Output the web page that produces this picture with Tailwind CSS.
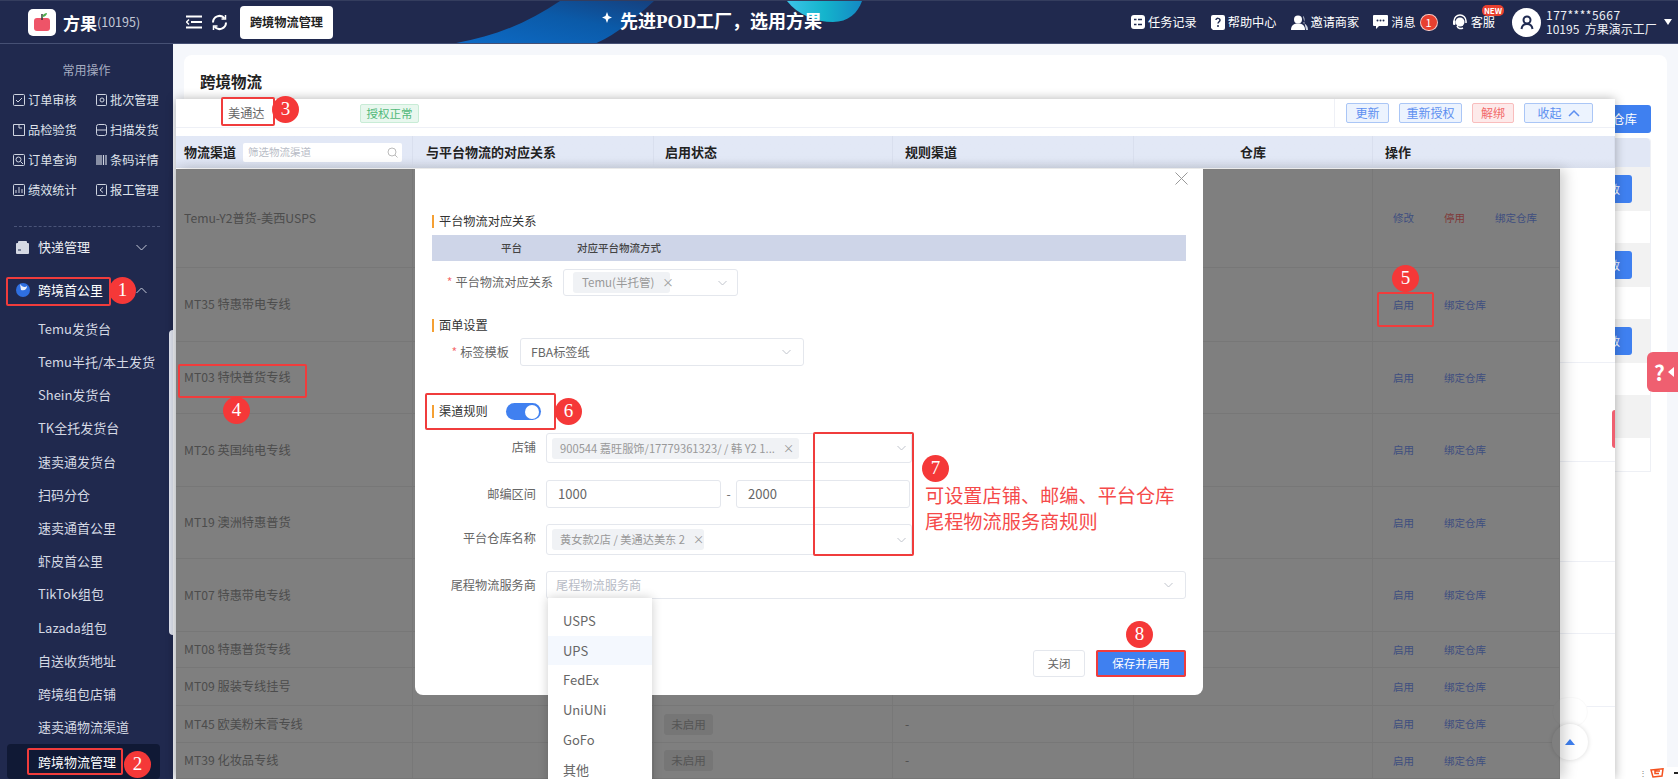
<!DOCTYPE html>
<html lang="zh-CN">
  <head>
    <meta charset="UTF-8" />
    <title>跨境物流管理</title>
    <script src="https://cdn.jsdelivr.net/npm/@tailwindcss/browser@4"></script>
  </head>
  <body class="relative w-[1678px] h-[779px] overflow-hidden bg-[#f5f7fb] font-['Noto_Sans_CJK_SC',sans-serif] text-[#333]">
    <!-- header -->
    <header class="relative h-[44px] bg-[#20294e] border-t border-t-[#343d5e] border-b border-b-[#465074] flex items-center text-white overflow-hidden">
      <svg class="absolute left-[420px] top-0" width="500" height="44" viewBox="0 0 500 44">
        <defs>
          <linearGradient id="swoop" x1="0" y1="1" x2="1" y2="0">
            <stop offset="0" stop-color="#0d6cc8" />
            <stop offset="0.600" stop-color="#0b5aa8" />
            <stop offset="1" stop-color="#15407e" />
          </linearGradient>
          <linearGradient id="teal" x1="0" y1="0" x2="1" y2="0">
            <stop offset="0" stop-color="#3cc4e8" />
            <stop offset="0.500" stop-color="#14b4cc" />
            <stop offset="1" stop-color="#1488c4" />
          </linearGradient>
        </defs>
        <path d="M23 44C70 38 108 22 140 0H234C212 20 196 34 172 44Z" fill="url(#swoop)" />
        <path d="M367 0C378 14 396 21 413 21C428 21 438 12 442 0Z" fill="url(#teal)" />
        <path d="M187 11L188.500 15L192 16.500L188.500 18L187 22L185.500 18L182 16.500L185.500 15Z" fill="#fff" />
      </svg>
      <div class="relative w-[173px] shrink-0 flex items-center pl-[28px]">
        <div class="w-[28px] h-[27px] bg-white rounded-[5px] flex items-center justify-center">
          <svg width="18" height="20" viewBox="0 0 18 20"><rect x="1" y="6" width="16" height="13" rx="3" fill="#ee5468" /><path d="M9 8V2" stroke="#3a3a3a" stroke-width="1.500" /><path d="M9 5C10 2 12 1 14 1C14 3 12 5 9 5Z" fill="#4fae4e" /></svg>
        </div>
        <span class="ml-[7px] text-[17px] font-bold leading-none">方果</span><span class="text-[12.500px] text-[#c3c8d6] leading-none">(10195)</span>
      </div>
      <svg class="relative ml-[13px]" width="16" height="14" viewBox="0 0 16 14" fill="none" stroke="#fff" stroke-width="2"><path d="M0 1.500H16M5 7H16M0 12.500H16" /><path d="M3 4.500L0.500 7L3 9.500" stroke-width="1.500" /></svg>
      <svg class="relative ml-[9px]" width="17" height="17" viewBox="0 0 17 17" fill="none" stroke="#fff" stroke-width="2"><path d="M2 8.500A6.500 6.500 0 0 1 13.500 4.300M15 8.500A6.500 6.500 0 0 1 3.500 12.700" /><path d="M14.500 1V5H10.500M2.500 16V12H6.500" stroke-width="1.500" /></svg>
      <div class="relative ml-[12px] w-[93px] h-[33px] bg-white rounded-[4px] flex items-center justify-center text-[12.200px] font-bold text-[#222]">跨境物流管理</div>
      <div class="relative ml-[287px] text-[18px] font-bold whitespace-nowrap">先进<span class="font-['Liberation_Serif',serif] text-[19px]">POD</span>工厂，选用方果</div>
      <div class="relative ml-auto pr-[6px] flex items-center text-[12.200px]">
        <svg width="14" height="14" viewBox="0 0 14 14"><rect width="14" height="14" rx="3" fill="#fff" /><path d="M3 4.500H5.500M7 4.500H11M3 9.500H5.500M7 9.500H11" stroke="#1f2a50" stroke-width="1.500" /></svg>
        <span class="ml-[3px]">任务记录</span>
        <svg class="ml-[14px]" width="14" height="15" viewBox="0 0 14 15"><path d="M2 0H12A2 2 0 0 1 14 2V13A2 2 0 0 1 12 15H2L0 13V2A2 2 0 0 1 2 0Z" fill="#fff" /><path d="M5 5C5 2.800 9 2.800 9 5.200C9 6.800 7 6.800 7 8.600" stroke="#1f2a50" stroke-width="1.500" fill="none" /><circle cx="7" cy="11" r="1" fill="#1f2a50" /></svg>
        <span class="ml-[3px]">帮助中心</span>
        <svg class="ml-[14px]" width="17" height="15" viewBox="0 0 17 15"><circle cx="7" cy="4.500" r="4" fill="#fff" /><path d="M0 15C0 10 3 8.500 7 8.500C11 8.500 14 10 14 15Z" fill="#fff" /><path d="M12 1C14 2 14 7 12 8C15 9 17 11 17 15H15" fill="#cfd4e0" /></svg>
        <span class="ml-[3px]">邀请商家</span>
        <svg class="ml-[14px]" width="15" height="14" viewBox="0 0 15 14"><path d="M1 0H14A1 1 0 0 1 15 1V10A1 1 0 0 1 14 11H6L3 14V11H1A1 1 0 0 1 0 10V1A1 1 0 0 1 1 0Z" fill="#fff" /><circle cx="4.500" cy="5.500" r="1" fill="#1f2a50" /><circle cx="7.500" cy="5.500" r="1" fill="#1f2a50" /><circle cx="10.500" cy="5.500" r="1" fill="#1f2a50" /></svg>
        <span class="ml-[3px]">消息</span>
        <span class="ml-[4px] w-[18px] h-[17px] rounded-full bg-[#e8402f] border border-white/70 flex items-center justify-center text-[11px] leading-none">1</span>
        <svg class="ml-[14px]" width="16" height="16" viewBox="0 0 16 16" fill="none"><path d="M2 9V7A6 6 0 0 1 14 7V9" stroke="#fff" stroke-width="1.500" /><circle cx="8" cy="8" r="4.500" fill="#fff" /><path d="M5 12C6 15 9 15 11 14" stroke="#fff" stroke-width="1.500" /><rect x="1" y="6.500" width="2.500" height="4.500" rx="1" fill="#fff" /></svg>
        <span class="ml-[3px] mr-[17px]">客服</span>
        <div class="w-[29px] h-[29px] rounded-full bg-white flex items-center justify-center">
          <svg width="14" height="15" viewBox="0 0 14 15" fill="none" stroke="#1f2a50" stroke-width="2"><circle cx="7" cy="5" r="3.500" /><path d="M1.500 14C2 10.500 4 9 7 9C10 9 12 10.500 12.500 14" /></svg>
        </div>
        <div class="ml-[5px] w-[110px] text-[12px] leading-[14px] text-[#eef0f5] whitespace-nowrap">
          <div class="tracking-[0.500px]">177****5667</div>
          <div>10195&nbsp; 方果演示工厂</div>
        </div>
        <div class="ml-[8px] w-0 h-0 border-x-[4px] border-x-transparent border-t-[6px] border-t-white"></div>
      </div>
    </header>
    <span class="absolute left-[1482px] top-[5px] w-[22px] h-[11px] rounded-[5px] bg-[#e8402f] text-white text-[8px] font-bold leading-[11px] text-center">NEW</span>

    <div class="flex h-[735px]">
      <!-- sidebar -->
      <aside class="relative w-[173px] shrink-0 bg-[#20294e] text-[#d5d9e4] text-[13px]">
        <div class="absolute right-0 top-[286px] w-[4px] h-[305px] bg-[#dfe3ee] rounded-l-sm"></div>
        <div class="mt-[18px] h-[16px] leading-[16px] text-center text-[12px] text-[#a6adc2]">常用操作</div>
        <div class="mt-[7px] ml-[13px] w-[150px] grid grid-cols-[83px_67px] auto-rows-[30px] items-center text-[12.200px] text-[#dfe2ea]">
          <div class="flex items-center gap-[3px]"><svg width="12" height="12" viewBox="0 0 12 12" fill="none" stroke="#cfd4e0"><rect x=".5" y=".5" width="11" height="11" rx="1" /><path d="M3 6L5 8L9 4" /></svg>订单审核</div>
          <div class="flex items-center gap-[3px]"><svg width="11" height="12" viewBox="0 0 11 12" fill="none" stroke="#cfd4e0"><rect x=".5" y=".5" width="10" height="11" rx="1" /><circle cx="6" cy="6" r="2" /></svg>批次管理</div>
          <div class="flex items-center gap-[3px]"><svg width="12" height="12" viewBox="0 0 12 12" fill="none" stroke="#cfd4e0"><path d="M.5 .5H11.500V11.500H.5Z" /><path d="M6 .5V4H9" /></svg>品检验货</div>
          <div class="flex items-center gap-[3px]"><svg width="11" height="12" viewBox="0 0 11 12" fill="none" stroke="#cfd4e0"><rect x=".5" y=".5" width="10" height="11" rx="2" /><path d="M0 6H11" /></svg>扫描发货</div>
          <div class="flex items-center gap-[3px]"><svg width="12" height="12" viewBox="0 0 12 12" fill="none" stroke="#cfd4e0"><rect x=".5" y=".5" width="11" height="11" rx="1" /><circle cx="5.500" cy="5.500" r="2.500" /><path d="M7.500 7.500L10 10" /></svg>订单查询</div>
          <div class="flex items-center gap-[3px]"><svg width="11" height="12" viewBox="0 0 11 12" stroke="#cfd4e0"><path d="M1 1V11M3 1V11M5 1V11M7.500 1V11M10 1V11" stroke-width="1.200" /></svg>条码详情</div>
          <div class="flex items-center gap-[3px]"><svg width="12" height="12" viewBox="0 0 12 12" fill="none" stroke="#cfd4e0"><rect x=".5" y=".5" width="11" height="11" rx="1" /><path d="M3 9V6M6 9V3M9 9V5" /></svg>绩效统计</div>
          <div class="flex items-center gap-[3px]"><svg width="11" height="12" viewBox="0 0 11 12" fill="none" stroke="#cfd4e0"><rect x=".5" y=".5" width="10" height="11" rx="1" /><path d="M7 3.500L4 6L7 8.500" /></svg>报工管理</div>
        </div>
        <div class="mt-[21px] mx-[14px] w-[146px] border-t border-dashed border-[#4a5478]"></div>
        <div class="mt-[5px] h-[30px] pl-[16px] flex items-center text-[#eceef3]">
          <svg width="13" height="13" viewBox="0 0 13 13"><rect y="2" width="13" height="11" rx="1" fill="#d5d9e4" /><rect x="2" width="9" height="3" rx="1" fill="#d5d9e4" /><path d="M2 9H5" stroke="#1f2a50" /></svg>
          <span class="ml-[9px]">快递管理</span>
          <svg class="ml-[46px]" width="11" height="11" viewBox="0 0 11 11" fill="none" stroke="#c5cad8"><path d="M.5 3L5.500 8L10.500 3" /></svg>
        </div>
        <div class="mt-[13px] h-[30px] pl-[16px] flex items-center text-white">
          <svg width="14" height="14" viewBox="0 0 14 14"><circle cx="7" cy="7" r="7" fill="#2f6fe0" /><path d="M4 1C6 4 9 5 11 3C11 6 9 8 5 7Z" fill="#eaf0fb" /></svg>
          <span class="ml-[8px]">跨境首公里</span>
          <svg class="ml-[33px]" width="11" height="11" viewBox="0 0 11 11" fill="none" stroke="#c5cad8"><path d="M.5 8L5.500 3L10.500 8" /></svg>
        </div>
        <ul class="mt-[7px] [&>li]:h-[33.200px] [&>li]:pl-[38px] [&>li]:flex [&>li]:items-center [&>li]:whitespace-nowrap">
          <li>Temu发货台</li>
          <li>Temu半托/本土发货</li>
          <li>Shein发货台</li>
          <li>TK全托发货台</li>
          <li>速卖通发货台</li>
          <li>扫码分仓</li>
          <li>速卖通首公里</li>
          <li>虾皮首公里</li>
          <li>TikTok组包</li>
          <li>Lazada组包</li>
          <li>自送收货地址</li>
          <li>跨境组包店铺</li>
          <li>速卖通物流渠道</li>
        </ul>
        <div class="absolute left-[7px] top-[700px] w-[153px] h-[35px] pl-[31px] flex items-center bg-[#101935] rounded-[4px] text-white">跨境物流管理</div>
      </aside>

      <!-- page behind the panel -->
      <main class="flex-1 pt-[11px] pl-[11px] pr-[11px]">
        <section class="h-[724px] bg-white rounded-t-lg px-[16px] pt-[16px]">
          <h1 class="h-[20px] leading-[20px] text-[15.500px] font-bold text-[#222]">跨境物流</h1>
          <div class="mt-[14px] flex justify-end">
            <div class="w-[100px] h-[28px] bg-[#3f80f0] rounded-[3px] text-white text-[12.200px] leading-[28px] text-right pr-[14px]">新增仓库</div>
          </div>
          <div class="mt-[5px] border-x border-b border-[#eef0f5] rounded-t">
            <div class="h-[29px] bg-[#e1e7f5] rounded-t"></div>
            <div class="h-[44px] bg-[#f2f2f2] flex items-center justify-end pr-[18px]"><span class="w-[40px] h-[28px] bg-[#3f80f0] rounded-[3px] text-white text-[11px] leading-[28px] text-right pr-[12px]">修改</span></div>
            <div class="h-[32px]"></div>
            <div class="h-[44px] bg-[#f2f2f2] flex items-center justify-end pr-[18px]"><span class="w-[40px] h-[28px] bg-[#3f80f0] rounded-[3px] text-white text-[11px] leading-[28px] text-right pr-[12px]">修改</span></div>
            <div class="h-[32px]"></div>
            <div class="h-[44px] bg-[#f2f2f2] flex items-center justify-end pr-[18px]"><span class="w-[40px] h-[28px] bg-[#3f80f0] rounded-[3px] text-white text-[11px] leading-[28px] text-right pr-[12px]">修改</span></div>
            <div class="h-[32px]"></div>
            <div class="h-[43px] bg-[#f2f2f2]"></div>
            <div class="h-[33px]"></div>
          </div>
        </section>
      </main>
    </div>

    <!-- floating panel -->
    <div class="absolute left-[176px] top-[99px] w-[1439px] h-[680px] bg-white shadow-[0_0_10px_rgba(0,0,0,0.3)]">
      <div class="h-[29px] flex items-center border-b border-[#eef0f6]">
        <span class="ml-[52px] w-[132px] text-[12.200px] text-[#666]">美通达</span>
        <span class="w-[59px] h-[19px] bg-[#e8f7ee] border border-[#c8ecd6] rounded-[2px] text-[#52b97a] text-[11.500px] leading-[17px] text-center">授权正常</span>
        <div class="ml-auto h-full pl-[11px] pr-[22px] border-l border-[#eef0f6] flex items-center gap-[10px] text-[12px]">
          <span class="w-[43px] h-[20px] bg-[#ecf3fe] border border-[#aac6f6] rounded-[2px] text-[#5d8ff0] leading-[18px] text-center">更新</span>
          <span class="w-[63px] h-[20px] bg-[#ecf3fe] border border-[#aac6f6] rounded-[2px] text-[#5d8ff0] leading-[18px] text-center">重新授权</span>
          <span class="w-[42px] h-[20px] bg-[#fdeaea] border border-[#f9bdbd] rounded-[2px] text-[#f26b6b] leading-[18px] text-center">解绑</span>
          <span class="w-[69px] h-[20px] bg-[#ecf3fe] border border-[#aac6f6] rounded-[2px] text-[#5d8ff0] flex items-center justify-center gap-[6px]">收起<svg width="12" height="7" viewBox="0 0 12 7" fill="none" stroke="#5d8ff0" stroke-width="1.500"><path d="M1 6L6 1L11 6" /></svg></span>
        </div>
      </div>
      <div class="mt-[8px] h-[32px] grid grid-cols-[237px_241px_239px_241px_239px_242px] items-stretch bg-linear-to-b from-[#e2e8f6] from-70% to-[#d8deec] text-[13px] font-bold text-[#222] [&>div]:flex [&>div]:items-center [&>div]:border-r [&>div]:border-[#d9dfee]">
        <div class="pl-[8px]">
          <span class="w-[59px] whitespace-nowrap">物流渠道</span>
          <span class="w-[159px] h-[19px] bg-white rounded-[2px] pl-[5px] pr-[4px] flex items-center justify-between text-[10.500px] font-normal text-[#b8bcc6]">筛选物流渠道<svg width="11" height="11" viewBox="0 0 11 11" fill="none" stroke="#bbb"><circle cx="5" cy="5" r="4" /><path d="M8 8L10.500 10.500" /></svg></span>
        </div>
        <div class="pl-[13px]">与平台物流的对应关系</div>
        <div class="pl-[11px]">启用状态</div>
        <div class="pl-[12px]">规则渠道</div>
        <div class="justify-center">仓库</div>
        <div class="pl-[12px] border-r-0">操作</div>
      </div>

      <div class="flex mt-[1px]">
        <div class="w-[1384px] shrink-0 text-[12.200px] text-[#999999] [&>div]:grid [&>div]:grid-cols-[237px_241px_239px_241px_239px_187px] [&>div]:border-b [&>div]:border-[#eeeeee] [&>div>div]:flex [&>div>div]:items-center [&>div>div]:border-r [&>div>div]:border-[#f0f0f0]">
          <div class="h-[99px]"><div class="pl-[8px]">Temu-Y2普货-美西USPS</div><div></div><div></div><div></div><div></div><div class="pl-[20px] gap-[30px] text-[10.500px] text-[#7d9dff] border-r-0"><span>修改</span><span class="text-[#ff7474]">停用</span><span>绑定仓库</span></div></div>
          <div class="h-[74px]"><div class="pl-[8px]">MT35 特惠带电专线</div><div></div><div></div><div></div><div></div><div class="pl-[20px] gap-[30px] text-[10.500px] text-[#7d9dff] border-r-0"><span>启用</span><span>绑定仓库</span></div></div>
          <div class="h-[72px]"><div class="pl-[8px]">MT03 特快普货专线</div><div></div><div></div><div></div><div></div><div class="pl-[20px] gap-[30px] text-[10.500px] text-[#7d9dff] border-r-0"><span>启用</span><span>绑定仓库</span></div></div>
          <div class="h-[73px]"><div class="pl-[8px]">MT26 英国纯电专线</div><div></div><div></div><div></div><div></div><div class="pl-[20px] gap-[30px] text-[10.500px] text-[#7d9dff] border-r-0"><span>启用</span><span>绑定仓库</span></div></div>
          <div class="h-[72px]"><div class="pl-[8px]">MT19 澳洲特惠普货</div><div></div><div></div><div></div><div></div><div class="pl-[20px] gap-[30px] text-[10.500px] text-[#7d9dff] border-r-0"><span>启用</span><span>绑定仓库</span></div></div>
          <div class="h-[73px]"><div class="pl-[8px]">MT07 特惠带电专线</div><div></div><div></div><div></div><div></div><div class="pl-[20px] gap-[30px] text-[10.500px] text-[#7d9dff] border-r-0"><span>启用</span><span>绑定仓库</span></div></div>
          <div class="h-[36px]"><div class="pl-[8px]">MT08 特惠普货专线</div><div></div><div></div><div></div><div></div><div class="pl-[20px] gap-[30px] text-[10.500px] text-[#7d9dff] border-r-0"><span>启用</span><span>绑定仓库</span></div></div>
          <div class="h-[38px]"><div class="pl-[8px]">MT09 服装专线挂号</div><div></div><div></div><div></div><div></div><div class="pl-[20px] gap-[30px] text-[10.500px] text-[#7d9dff] border-r-0"><span>启用</span><span>绑定仓库</span></div></div>
          <div class="h-[37px]"><div class="pl-[8px]">MT45 欧美粉末膏专线</div><div></div><div class="pl-[10px]"><span class="w-[49px] h-[21px] bg-[#ececec] rounded-[3px] text-[11.500px] text-[#aaaaaa] leading-[21px] text-center">未启用</span></div><div class="pl-[12px]">-</div><div></div><div class="pl-[20px] gap-[30px] text-[10.500px] text-[#7d9dff] border-r-0"><span>启用</span><span>绑定仓库</span></div></div>
          <div class="h-[36px]"><div class="pl-[8px]">MT39 化妆品专线</div><div></div><div class="pl-[10px]"><span class="w-[49px] h-[21px] bg-[#ececec] rounded-[3px] text-[11.500px] text-[#aaaaaa] leading-[21px] text-center">未启用</span></div><div class="pl-[12px]">-</div><div></div><div class="pl-[20px] gap-[30px] text-[10.500px] text-[#7d9dff] border-r-0"><span>启用</span><span>绑定仓库</span></div></div>
        </div>
        <div class="flex-1 [&>div]:border-b [&>div]:border-[#eef0f6]">
          <div class="h-[194px]"></div>
          <div class="h-[99px]"></div>
          <div class="h-[100px]"></div>
          <div class="h-[72px]"></div>
          <div class="h-[73px]"></div>
        </div>
      </div>

      <!-- scroll buttons sit under the dim layer -->
      <div class="absolute left-[1376px] top-[598px] w-[36px] h-[30px] rounded-full bg-white border border-[#fafafa]"></div>
      <div class="absolute left-[1376px] top-[625px] w-[36px] h-[36px] rounded-full bg-white shadow-[0_0_5px_rgba(0,0,0,0.15)] flex items-center justify-center">
        <div class="w-0 h-0 border-x-[5px] border-x-transparent border-b-[6px] border-b-[#3f80f0]"></div>
      </div>

      <!-- dim layer + modal -->
      <div class="absolute left-0 top-[70px] w-[1384px] h-[610px] bg-black/50 shadow-[5px_0_12px_rgba(0,0,0,0.18)]">
        <div class="absolute left-[239px] top-0 w-[788px] h-[526px] bg-white rounded-b-lg px-[17px] pt-[46px] text-[12.200px] text-[#666]">
          <svg class="absolute left-[760px] top-[3px]" width="13" height="13" viewBox="0 0 13 13" stroke="#999"><path d="M.5 .5L12.500 12.500M12.500 .5L.5 12.500" /></svg>

          <div class="h-[13px] border-l-2 border-[#f5a033] pl-[5px] leading-[13px] text-[#333]">平台物流对应关系</div>
          <div class="mt-[7px] h-[26px] bg-[#ced5e8] flex items-center text-[10.500px] font-medium text-[#444]">
            <span class="ml-[69px]">平台</span><span class="ml-[55px]">对应平台物流方式</span>
          </div>
          <div class="mt-[8px] flex items-center gap-[10px]">
            <span class="w-[121px] text-right whitespace-nowrap"><span class="text-[#f56c6c] mr-[3px]">*</span>平台物流对应关系</span>
            <div class="w-[175px] h-[27px] border border-[#e4e7ed] rounded-[3px] flex items-center pl-[9px] pr-[10px]">
              <span class="w-[97px] h-[21px] bg-[#f0f2f5] rounded-[3px] pl-[9px] text-[11.500px] text-[#999] leading-[21px] whitespace-nowrap">Temu(半托管)<span class="ml-[8px]">×</span></span>
              <svg class="ml-auto" width="9" height="6" viewBox="0 0 9 6" fill="none" stroke="#c0c4cc"><path d="M.5 1L4.500 5L8.500 1" /></svg>
            </div>
          </div>

          <div class="mt-[23px] h-[13px] border-l-2 border-[#f5a033] pl-[5px] leading-[13px] text-[#333]">面单设置</div>
          <div class="mt-[6px] flex items-center gap-[11px]">
            <span class="w-[77px] text-right whitespace-nowrap"><span class="text-[#f56c6c] mr-[3px]">*</span>标签模板</span>
            <div class="w-[284px] h-[28px] border border-[#e4e7ed] rounded-[3px] flex items-center pl-[10px] pr-[12px]">
              <span>FBA标签纸</span>
              <svg class="ml-auto" width="9" height="6" viewBox="0 0 9 6" fill="none" stroke="#c0c4cc"><path d="M.5 1L4.500 5L8.500 1" /></svg>
            </div>
          </div>

          <div class="mt-[37px] h-[17px] flex items-center">
            <div class="h-[13px] w-[74px] border-l-2 border-[#f5a033] pl-[5px] leading-[13px] text-[#333]">渠道规则</div>
            <div class="w-[35px] h-[17px] rounded-full bg-[#4080f0] flex items-center justify-end pr-[2px]"><span class="w-[14px] h-[14px] rounded-full bg-white"></span></div>
          </div>
          <div class="mt-[13px] flex items-center gap-[10px]">
            <span class="w-[104px] text-right -mt-[2px]">店铺</span>
            <div class="w-[366px] h-[30px] border border-[#e4e7ed] rounded-[3px] flex items-center pl-[5px] pr-[5px]">
              <span class="w-[247px] h-[21px] bg-[#f0f2f5] rounded-[3px] pl-[8px] text-[11.200px] text-[#999] leading-[21px] whitespace-nowrap">900544 嘉旺服饰/17779361323/ / 韩 Y2 1...<span class="ml-[8px]">×</span></span>
              <svg class="ml-auto" width="9" height="6" viewBox="0 0 9 6" fill="none" stroke="#c0c4cc"><path d="M.5 1L4.500 5L8.500 1" /></svg>
            </div>
          </div>
          <div class="mt-[17px] flex items-center gap-[10px]">
            <span class="w-[104px] text-right">邮编区间</span>
            <div class="w-[175px] h-[28px] border border-[#e4e7ed] rounded-[3px] pl-[11px] leading-[26px] text-[13px]">1000</div>
            <span class="w-[5px] -mx-[5px] text-center">-</span>
            <div class="w-[174px] h-[28px] border border-[#e4e7ed] rounded-[3px] pl-[11px] leading-[26px] text-[13px]">2000</div>
          </div>
          <div class="mt-[16px] flex items-center gap-[10px]">
            <span class="w-[104px] text-right -mt-[2px]">平台仓库名称</span>
            <div class="w-[366px] h-[31px] border border-[#e4e7ed] rounded-[3px] flex items-center pl-[5px] pr-[5px]">
              <span class="w-[152px] h-[21px] bg-[#f0f2f5] rounded-[3px] pl-[8px] text-[11.200px] text-[#999] leading-[21px] whitespace-nowrap">黄女款2店 / 美通达美东 2<span class="ml-[8px]">×</span></span>
              <svg class="ml-auto" width="9" height="6" viewBox="0 0 9 6" fill="none" stroke="#c0c4cc"><path d="M.5 1L4.500 5L8.500 1" /></svg>
            </div>
          </div>
          <div class="mt-[16px] flex items-center gap-[10px]">
            <span class="w-[104px] text-right whitespace-nowrap">尾程物流服务商</span>
            <div class="w-[640px] h-[28px] border border-[#e4e7ed] rounded-[3px] flex items-center pl-[9px] pr-[12px] text-[#b8bcc6]">
              <span>尾程物流服务商</span>
              <svg class="ml-auto" width="9" height="6" viewBox="0 0 9 6" fill="none" stroke="#c0c4cc"><path d="M.5 1L4.500 5L8.500 1" /></svg>
            </div>
          </div>
          <div class="mt-[51px] flex justify-end gap-[11px] text-[11.500px]">
            <span class="w-[52px] h-[27px] border border-[#e4e7ed] rounded-[3px] text-center leading-[25px]">关闭</span>
            <span class="w-[90px] h-[27px] bg-[#3f80f0] rounded-[3px] text-white text-center leading-[27px]">保存并启用</span>
          </div>

          <ul class="absolute left-[133px] top-[429px] w-[104px] h-[190px] pt-[8px] bg-white shadow-[0_0_10px_rgba(0,0,0,0.2)] text-[13px] text-[#666] [&>li]:h-[29.700px] [&>li]:pl-[15px] [&>li]:flex [&>li]:items-center">
            <li>USPS</li>
            <li class="bg-[#f4f8fe]">UPS</li>
            <li>FedEx</li>
            <li>UniUNi</li>
            <li>GoFo</li>
            <li>其他</li>
          </ul>
        </div>
      </div>
    </div>

    <!-- floating help tab and edge tab -->
    <div class="absolute left-[1612px] top-[410px] w-[3px] h-[38px] bg-[#ef5f70] rounded-l"></div>
    <div class="absolute left-[1647px] top-[352px] w-[31px] h-[40px] bg-[#ef5f70] rounded-l-[6px] flex items-center pl-[7px] gap-[3px] text-white font-bold text-[21px] leading-none">?<span class="w-0 h-0 border-y-[5px] border-y-transparent border-r-[6px] border-r-white"></span></div>
    <div class="absolute left-[1636px] top-[767px] w-[42px] h-[12px] bg-white flex items-center pl-[3px]">
      <span class="text-[8px] leading-none text-[#777]">⋮</span>
      <svg class="ml-[3px]" width="15" height="10" viewBox="0 0 15 10" fill="none" stroke="#f4511e" stroke-width="1.500"><path d="M1 2L13 .8L12 8L3 9L1 2ZM10 3H5V5.500H9" /></svg>
      <span class="ml-[9px] w-[4px] h-[2px] bg-[#222]"></span>
    </div>

    <!-- tutorial marks: boxes -->
    <div class="absolute left-[6px] top-[277px] w-[105px] h-[29px] border-2 border-[#f03c3c] rounded-[2px]"></div>
    <div class="absolute left-[27px] top-[748px] w-[96px] h-[27px] border-2 border-[#f03c3c] rounded-[2px]"></div>
    <div class="absolute left-[221px] top-[97px] w-[54px] h-[29px] border-2 border-[#f03c3c] rounded-[2px]"></div>
    <div class="absolute left-[178px] top-[364px] w-[129px] h-[34px] border-2 border-[#f03c3c] rounded-[2px]"></div>
    <div class="absolute left-[1377px] top-[292px] w-[57px] h-[35px] border-2 border-[#f03c3c] rounded-[2px]"></div>
    <div class="absolute left-[425px] top-[393px] w-[131px] h-[37px] border-2 border-[#f03c3c] rounded-[2px]"></div>
    <div class="absolute left-[813px] top-[432px] w-[101px] h-[124px] border-2 border-[#f03c3c] rounded-[2px]"></div>
    <div class="absolute left-[1096px] top-[650px] w-[90px] h-[27px] border-2 border-[#f03c3c] rounded-[2px]"></div>

    <!-- tutorial marks: numbers -->
    <div class="absolute left-[109px] top-[277px] w-[27px] h-[27px] rounded-full bg-[#f53838] text-white font-['Liberation_Serif',serif] text-[19px] flex items-center justify-center">1</div>
    <div class="absolute left-[124px] top-[751px] w-[27px] h-[27px] rounded-full bg-[#f53838] text-white font-['Liberation_Serif',serif] text-[19px] flex items-center justify-center">2</div>
    <div class="absolute left-[272px] top-[96px] w-[27px] h-[27px] rounded-full bg-[#f53838] text-white font-['Liberation_Serif',serif] text-[19px] flex items-center justify-center">3</div>
    <div class="absolute left-[223px] top-[397px] w-[27px] h-[27px] rounded-full bg-[#f53838] text-white font-['Liberation_Serif',serif] text-[19px] flex items-center justify-center">4</div>
    <div class="absolute left-[1392px] top-[265px] w-[27px] h-[27px] rounded-full bg-[#f53838] text-white font-['Liberation_Serif',serif] text-[19px] flex items-center justify-center">5</div>
    <div class="absolute left-[555px] top-[398px] w-[27px] h-[27px] rounded-full bg-[#f53838] text-white font-['Liberation_Serif',serif] text-[19px] flex items-center justify-center">6</div>
    <div class="absolute left-[922px] top-[455px] w-[27px] h-[27px] rounded-full bg-[#f53838] text-white font-['Liberation_Serif',serif] text-[19px] flex items-center justify-center">7</div>
    <div class="absolute left-[1126px] top-[621px] w-[27px] h-[27px] rounded-full bg-[#f53838] text-white font-['Liberation_Serif',serif] text-[19px] flex items-center justify-center">8</div>
    <div class="absolute left-[925px] top-[482px] text-[19.200px] leading-[26px] text-[#f54a4a] whitespace-nowrap">可设置店铺、邮编、平台仓库<br />尾程物流服务商规则</div>
  </body>
</html>
